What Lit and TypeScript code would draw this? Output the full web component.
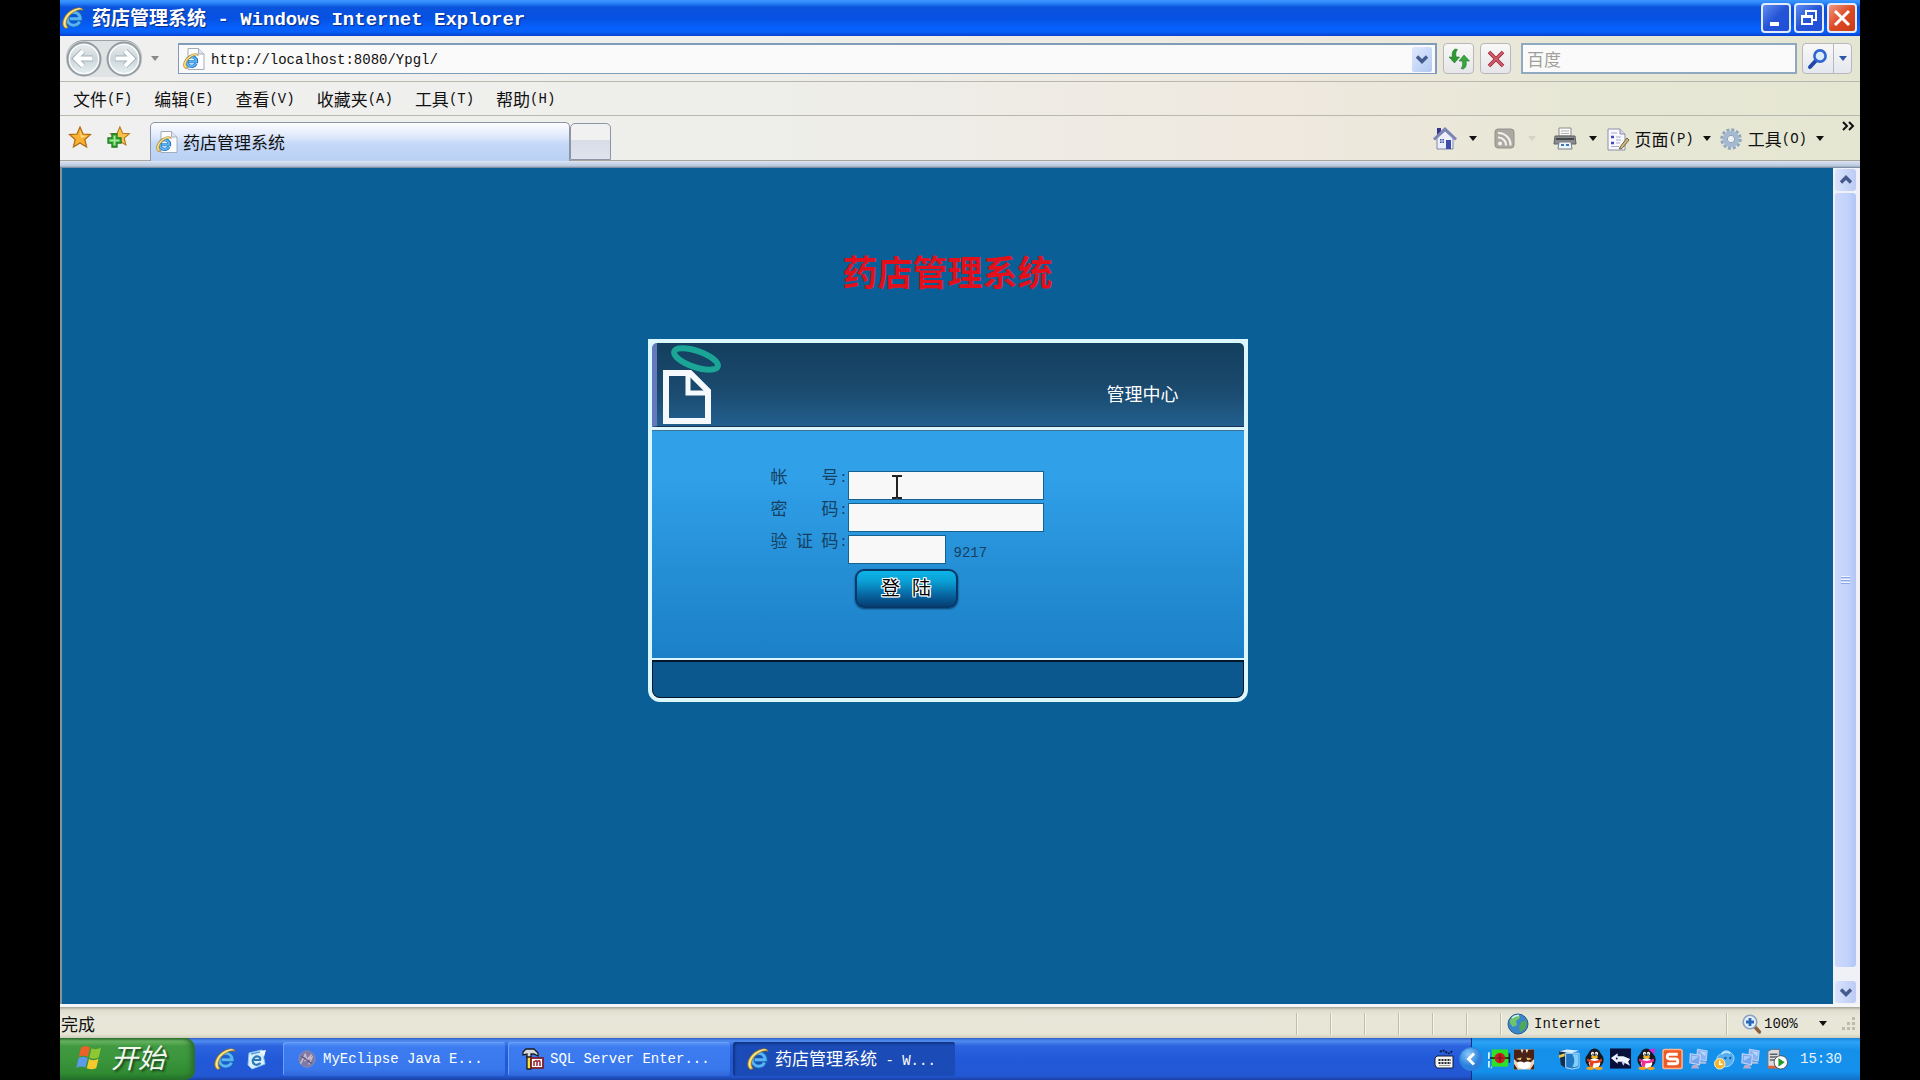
import { LitElement, html, css, svg } from "lit";
import { customElement } from "lit/decorators.js";

const icon = (cls: string, box: string, body: unknown) =>
  html`<svg class=${cls} viewBox=${box} aria-hidden="true">${body}</svg>`;

/* ---- shared glyph pieces ---- */
const ieMark = svg`
  <path d="M18.600 15.500A7 7 0 1 1 19.400 12.500H8" fill="none" stroke="#1766b8" stroke-width="4.600"/>
  <path d="M18.300 15.300A6.800 6.800 0 1 1 19 12.300H8" fill="none" stroke="#58b4f4" stroke-width="3"/>
  <path d="M3.500 22.500C-2.500 18 2.500 8 9 4C14.500 .5 21 -.5 22 3.500C18.500 1.800 14 4 10.500 6.500C5 10.500 2.500 17 6.500 21.500Z" fill="#f3cf58" stroke="#94701c" stroke-width=".8"/>
  <path d="M3.500 20C1 16.500 4 9.500 9.500 5.500C13 3 17 1.500 19.500 1.800" fill="none" stroke="#fdf0b0" stroke-width="1"/>`;

const ieLogo = (cls = "i22") => icon(cls, "0 0 23 23", ieMark);

const iePage = (cls = "i22") =>
  icon(cls, "0 0 22 22", svg`
  <path d="M5 .5H15.500L21 6V21.500H5Z" fill="#fdfdff" stroke="#a3acba"/>
  <path d="M15.500 .5V6H21" fill="#dfe6f2" stroke="#a3acba"/>
  <g transform="translate(0 5) scale(.7)">${ieMark}</g>`);

const caret = (cls = "caret") => icon(cls, "0 0 8 5", svg`<path d="M0 0H8L4 5Z" fill="currentColor"/>`);

const star = "M11 1L14 8L21.500 8.600L15.800 13.500L17.600 21L11 17L4.400 21L6.200 13.500L.5 8.600L8 8Z";

const penguin = (scarf: string, bow: unknown) => svg`
  <ellipse cx="11" cy="12" rx="9.500" ry="9" fill="#15181f"/>
  <ellipse cx="11" cy="7" rx="6.500" ry="7" fill="#15181f"/>
  <ellipse cx="11" cy="15.500" rx="6" ry="5.500" fill="#fff"/>
  <ellipse cx="9" cy="5.500" rx="1.700" ry="2.200" fill="#fff"/><ellipse cx="13" cy="5.500" rx="1.700" ry="2.200" fill="#fff"/>
  <circle cx="9.400" cy="6" r=".8" fill="#111"/><circle cx="12.600" cy="6" r=".8" fill="#111"/>
  <ellipse cx="11" cy="9" rx="3.600" ry="1.500" fill="#f7b21c"/>
  <path d="M3.500 10.500Q11 15.500 18.500 10.500L18.800 13.500Q14 15.800 10 15.500L9 19.500L5.500 18.500L6 14.500L3.200 13Z" fill="${scarf}"/>
  <ellipse cx="6.500" cy="20.800" rx="4" ry="1.600" fill="#f7a21c"/><ellipse cx="15.500" cy="20.800" rx="4" ry="1.600" fill="#f7a21c"/>
  ${bow}`;

const monitors = svg`
  <path d="M10 1L20 2.500L19 13L9 11Z" fill="#8db4f2" stroke="#b4cdf6" stroke-width="1.200"/>
  <path d="M12 3L18.500 4L18 8Z" fill="#bcd8fc"/>
  <path d="M12 13.500H18L19.500 16H11Z" fill="#b3bee0"/>
  <path d="M2.500 5.500L13 7L12 17L2 15Z" fill="#7aa6ee" stroke="#c3d7fa" stroke-width="1.200"/>
  <path d="M4 7.500L11.500 8.500L4 13Z" fill="#a9cbfb"/>
  <path d="M5 17H10L12 21H3Z" fill="#b9a9cc"/>`;

const art = {
  back: svg`<circle cx="18" cy="18" r="16.500" fill="url(#nav)" stroke="#949da3" stroke-width="2"/>
    <circle cx="18" cy="18" r="14.500" fill="none" stroke="#fbfcfc" stroke-width="1.200"/>
    <path d="M17 10L9.500 17.500L17 25M10 17.500H27" fill="none" stroke="#a3b1b9" stroke-width="6"/>
    <path d="M17 10L9.500 17.500L17 25M10 17.500H26.500" fill="none" stroke="#fff" stroke-width="4"/>`,
  refresh: svg`<path d="M7 1C3.500 3.500 4 7 4.600 9H1L6.500 15L11.500 9H8.200C7.400 6 7.500 4 9.500 1.500Z" fill="#2f9a32" stroke="#1d7623" stroke-width=".6"/>
    <path d="M15.500 21C19 18.500 18.500 15 17.900 13H21.500L16 7L11 13H14.300C15 16 15 18 13 20.500Z" fill="#3aa53c" stroke="#1d7623" stroke-width=".6"/>`,
  stop: svg`<path d="M4 4L18 18M18 4L4 18" stroke="#8e2a38" stroke-width="3.600"/><path d="M4 4L18 18M18 4L4 18" stroke="#d8576a" stroke-width="2"/>`,
  search: svg`<path d="M3 19L9 12.500" stroke="#1f48a8" stroke-width="4" stroke-linecap="round"/><circle cx="13" cy="8" r="5.600" fill="#dcecff" stroke="#2f66d0" stroke-width="2.600"/>`,
  chevron: svg`<path d="M2 2.500L7 7.500L12 2.500" fill="none" stroke="#44598c" stroke-width="3.400"/>`,
  star: svg`<path d=${star} fill="#f9b233" stroke="#b06a12" stroke-width="1.200"/><path d="M11 4L13 9.500L18 10L12 12Z" fill="#ffe08a"/>`,
  addStar: svg`<path transform="translate(3 0) scale(.9)" d=${star} fill="#f9c14a" stroke="#b0781a" stroke-width="1.200"/>
    <path d="M5 8H10V12H14V17H10V21H5V17H1V12H5Z" fill="#4fc04a" stroke="#1d7a22" stroke-width="1.300"/>
    <path d="M7.500 10V19M3 14.500H12" stroke="#a6ea9a" stroke-width="1.400"/>`,
  home: svg`<path d="M4 1H8V8H4Z" fill="#35358a"/><path d="M4 11V22H20V11L12 4Z" fill="#eceefb" stroke="#7d86ae"/>
    <path d="M1 12.500L12 2L23 12.500" fill="none" stroke="#7c84b4" stroke-width="3"/><path d="M13 13H18V22H13Z" fill="#3f4da6"/><path d="M7 12H11V16H7Z" fill="#485ba0"/><path d="M7 14H11M9 12V16" stroke="#dfe5ff" stroke-width=".8"/>`,
  rss: svg`<rect x="1" y="1" width="19" height="19" rx="3" fill="#a9a9a2" stroke="#92928a"/><circle cx="6" cy="15.500" r="2" fill="#f2f2ea"/>
    <path d="M4 9.500A7.500 7.500 0 0 1 12 17.500M4 5A12 12 0 0 1 16.500 17.500" fill="none" stroke="#f2f2ea" stroke-width="2.200"/>`,
  print: svg`<path d="M6 1H18V9H6Z" fill="#fafafa" stroke="#8c8c8c"/><path d="M8 4H16M8 6.500H16" stroke="#b5b5b5"/>
    <path d="M2 9H22L23 17H1Z" fill="#8a8d90" stroke="#5f6164"/><path d="M3 12H21" stroke="#45474a" stroke-width="2"/>
    <path d="M6 15H18L19 22H5Z" fill="#eef4fb" stroke="#7c7f84"/><path d="M8 18H11M13 18H16" stroke="#3a78bc" stroke-width="2"/>`,
  page: svg`<path d="M1 1H13L18 6V22H1Z" fill="#f8f8ff" stroke="#8b8fa8"/><path d="M13 1V6H18" fill="#d9dcf0" stroke="#8b8fa8"/>
    <path d="M4 9H7M4 15H7" stroke="#4447ae" stroke-width="2.400"/><path d="M9 9H14M9 12H14M9 15H13M4 18.500H12M4 5H10" stroke="#a9a9c8"/>
    <path d="M13 19L20 10L22 12L15 20.500L12.500 21Z" fill="#d5b878" stroke="#6e6440"/>`,
  gear: svg`<circle cx="12" cy="12" r="10" fill="none" stroke="#8ea5be" stroke-width="3.400" stroke-dasharray="3.200 2.036"/>
    <circle cx="12" cy="12" r="6.600" fill="none" stroke="#a5bad0" stroke-width="5"/><circle cx="12" cy="12" r="4" fill="#eef2f2" stroke="#8299b4"/>`,
  globe: svg`<circle cx="11" cy="11" r="10" fill="#3a86cc" stroke="#2a5d8d"/><path d="M3 7Q6 1.500 12 2L13 5L9 8L10 12L6 14Q2 11 3 7Z" fill="#6fc56a"/>
    <path d="M14 9L19 7Q21 12 18 16L13 19L12 14Z" fill="#4fa85a"/><path d="M5 5Q8 2 12 2.500" stroke="#d9f2ff" stroke-width="1.500" fill="none"/>`,
  zoom: svg`<path d="M12.500 12.500L17.500 18" stroke="#8a5f3c" stroke-width="3.400" stroke-linecap="round"/><circle cx="8" cy="8" r="6.800" fill="#e2effb" stroke="#8aa0bd" stroke-width="1.600"/><path d="M8 4V12M4 8H12" stroke="#2868b8" stroke-width="2.800"/>`,
  flag: svg`<path d="M5 3.500Q9.500 .5 14 3.500L12 13Q8 10.500 2.800 13Z" fill="#e8622a"/><path d="M15.500 4.300Q20 6.500 25 3.500L22.800 13.300Q18 16 13.300 13.500Z" fill="#8cc832"/>
    <path d="M2.500 14.200Q7.500 12 11.700 14.200L9.500 23.500Q5 21.500 .3 24Z" fill="#5b9bea"/><path d="M13 14.900Q18 17.500 22.500 14.700L20.300 24Q16 26.500 10.800 24.200Z" fill="#f6c92c"/>`,
  mail: svg`<path d="M3 4L16 1L19 15L6 20L2 16Z" fill="#d8eefc" stroke="#8fc7ee"/><path d="M14 2L20 1L18 8Z" fill="#f0f8ff"/>
    <path d="M14.500 14Q12 16.500 9 15.500Q6 14 7 10.500Q8.500 7 12 7.500Q15 8.500 14 11H8" fill="none" stroke="#2a78b8" stroke-width="2.200"/><path d="M5 5L14 3" stroke="#58a2d8" stroke-width="1.500"/>`,
  eclipse: svg`<circle cx="10" cy="11" r="9" fill="#7e7aa8" stroke="#8c88b0"/><path d="M3 16L8 6L10 12L15 6M7 13L16 9M12 17L16 8" stroke="#c9bcc8" stroke-width="1.700" fill="none"/><path d="M4 8L15 16" stroke="#55507e" stroke-width="1.300"/>`,
  sql: svg`<path d="M1 4L4 1H12L16 5V8L12 6H9V10H5V6L1 7Z" fill="#d7dbe0" stroke="#1c1c1c" stroke-width="1.300"/><path d="M5 9H9V21H5Z" fill="#f2e23a" stroke="#1c1c1c" stroke-width="1.300"/>
    <rect x="9" y="10" width="12" height="10" fill="#fff" stroke="#7b1f2c" stroke-width="1.800"/><path d="M12 18V13M12 14Q15 11.500 15 14V18M15 14Q18 11.500 18 14V18" stroke="#9a1f30" stroke-width="1.500" fill="none"/>`,
  keyboard: svg`<path d="M6 3Q9 0 12 3T18 2" stroke="#0c1a40" stroke-width="1.800" fill="none" stroke-dasharray="2 1"/><path d="M3 7H19V19H3L1 16V9Z" fill="#f4f4f0" stroke="#121a38"/>
    <path d="M4.500 11H17M4.500 14H17" stroke="#20242c" stroke-width="1.800" stroke-dasharray="2 1"/><path d="M5 16.500H16" stroke="#9a9a94"/>`,
  hide: svg`<circle cx="12" cy="12" r="11.500" fill="url(#hideFill)" stroke="#2d7fd8"/><path d="M15 6.500L9.500 12L15 17.500" fill="none" stroke="#fff" stroke-width="3"/>`,
  card: svg`<rect x="5" y="1" width="17" height="18" fill="#2fe02a"/><path d="M2 4V20H5" stroke="#fff" stroke-width="1.600" fill="none" stroke-dasharray="7 2"/><path d="M3 10H24M23.500 5V15" stroke="#0d2410" stroke-width="1.600"/><circle cx="13.500" cy="10" r="5.500" fill="#c81e22"/><path d="M10 10H17M13.500 6V14" stroke="#6a1210" stroke-width="1.200"/>`,
  owl: svg`<rect x="1" y="1" width="21" height="21" fill="#e8d5b8"/><path d="M1 1H22V11L18 15H5L1 11Z" fill="#4a2115"/><path d="M8 1L9.500 5L11 1ZM13 1L14.500 5L16 1Z" fill="#f1e6da"/>
    <path d="M3 11L9 9.500L8 12Z" fill="#f6ead0"/><path d="M20 11L14 9.500L15 12Z" fill="#f6ead0"/><circle cx="7" cy="11" r="1.200" fill="#e5b93c"/><circle cx="16" cy="11" r="1.200" fill="#e5b93c"/>
    <path d="M4 15Q8 12 11.500 15Q15 12 19 15L17 20Q11 23 6 20Z" fill="#fff"/><path d="M1 16L5 22H1ZM22 16L18 22H22Z" fill="#4a2115"/>`,
  box: svg`<path d="M1 3L8 1V21L3 17Z" fill="#12304e"/><path d="M1 3L9 1L22 2L14 5Z" fill="#d9edfb"/><path d="M8 5H22V20Q15 23 8 20Z" fill="#2079c4" stroke="#bfe2fa"/><path d="M15 6H21V18Q18 20 15 19Q19 13 15 6Z" fill="#7ed0fa"/><path d="M1 7L7 5V8L1 10Z" fill="#f2c94a"/>`,
  fish: svg`<rect width="22" height="21" fill="#08103c"/><path d="M1 10L8 5V8H14L21 11L19 14L21 18L13 14H8V16Z" fill="#eef4ff"/><path d="M12 14L14 18L16 14" fill="#c9d8f2"/><circle cx="7" cy="10.500" r="1" fill="#08103c"/>`,
  sogou: svg`<rect x="1" y="1" width="20" height="20" rx="2" fill="#ee5a24" stroke="#ffb38c" stroke-width="1.600"/><path d="M16.500 6H8Q5.500 6 5.500 8.500T8 11H14Q16.500 11 16.500 13.500T14 16H5.500" fill="none" stroke="#fff" stroke-width="3"/>`,
  cloud: svg`<path d="M4 15Q1 8 7 6Q11 0 17 4Q23 8 20 14Q17 20 10 19Z" fill="#54aef0" stroke="#a7dafc"/><path d="M8 6Q12 2 17 5" stroke="#c5e8ff" stroke-width="1.500" fill="none"/><circle cx="12" cy="10" r="1.300" fill="#1f62ac"/><circle cx="17" cy="10" r="1.300" fill="#1f62ac"/>
    <circle cx="6" cy="16" r="5.500" fill="#f3b52c" stroke="#fff1c4"/><path d="M6 12.500V16.500H9" stroke="#fff" stroke-width="1.600" fill="none"/>`,
  server: svg`<path d="M2 3L6 1H14V20H2Z" fill="#d9dde2" stroke="#6a6f78"/><path d="M4 6H12M4 9H12M4 12H12" stroke="#5c6068" stroke-width="1.500"/><path d="M2 18H12V21H2Z" fill="#d8663c"/><circle cx="15.500" cy="14.500" r="7" fill="#fff" stroke="#4a5058"/><path d="M13 10L19.500 14.500L13 19Z" fill="#1f9a2c"/>`,
};

@customElement("app-root")
export class AppRoot extends LitElement {
  static styles = css`
    :host {
      display: block;
      --hair: #b9b8ae;
      --mono: "Liberation Mono", "Noto Sans CJK SC", monospace;
      --han: "Noto Sans CJK SC", sans-serif;
      font: 14px/20px var(--mono);
      color: #111;
      background: #000;
    }
    * { box-sizing: border-box; }
    svg { display: block; flex: none; overflow: visible; }
    button {
      display: flex; align-items: center; justify-content: center;
      margin: 0; padding: 0; border: 0; background: none;
      font: inherit; color: inherit; flex: none; white-space: nowrap;
    }
    input { font: inherit; color: inherit; border: 0; margin: 0; outline: none; min-width: 0; }
    .han { font-family: var(--han); font-size: 17px; line-height: 20px; }
    .i20 { width: 20px; height: 20px; }
    .i22 { width: 22px; height: 22px; }
    .i24 { width: 24px; height: 24px; }
    .i27 { width: 27px; height: 27px; }
    .i36 { width: 36px; height: 36px; }
    .chev { width: 14px; height: 10px; }
    .chev.up { transform: rotate(180deg); }
    .caret { width: 8px; height: 5px; }
    .flip { transform: scaleX(-1); }

    .screen { display: flex; flex-direction: column; min-height: 100vh; margin: 0 60px; background: #0a6096; }

    .title {
      display: flex; align-items: center; gap: 8px; height: 36px; padding: 0 3px 0 2px;
      color: #fff; font-weight: bold;
      background: linear-gradient(#3c97ff 0, #2b86f8 3px, #0a53dd 7px, #0651e2 18px, #0661fc 28px, #0660f8 32px, #0a3fce 36px);
      text-shadow: 1px 1px 1px #0b2c86;
    }
    .title h1 { flex: 1; margin: 0; font-size: 19px; line-height: 24px; white-space: pre; }
    .title .han { font-size: 19px; line-height: 24px; }
    .winbtns { display: flex; gap: 3px; }
    .winbtn {
      width: 30px; height: 30px; border: 2px solid #e4ecfb; border-radius: 4px;
      background: linear-gradient(135deg, #5f8df0, #2554d6 50%, #1d4fd8);
    }
    .winbtn.close { background: linear-gradient(135deg, #f09a80, #dd4a25 50%, #c93c14); }

    .chrome { background: linear-gradient(90deg, #f0f0f0, #eeeeea 40%, #efe9df 68%, #e7e7d6 84%, #e5e6d2); }
    .address { display: flex; align-items: center; height: 46px; padding: 0 8px 0 6px; border-bottom: 1px solid var(--hair); }
    .nav { display: flex; gap: 4px; margin-right: 9px; }
    .navpair { display: flex; gap: 4px; border-radius: 18px; background: #dfe3e4; box-shadow: 0 -1px #9da3a6; }
    .nav-caret { color: #8a8a8a; margin-right: 19px; }
    .url {
      display: flex; align-items: center; flex: 1; height: 31px; gap: 6px; padding: 0 3px 0 4px;
      background: #fafafa; border: 1px solid #7f9db9; border-width: 2px 2px 1px 1px;
    }
    .url input { flex: 1; height: 24px; padding: 2px 0 0; background: transparent; }
    .drop { width: 20px; height: 25px; border-radius: 2px; background: linear-gradient(135deg, #dfe9fd, #b2c8f2); }
    .toolbtn {
      width: 31px; height: 31px; border: 1px solid #b7b7bd; border-radius: 4px; margin-left: 6px;
      background: linear-gradient(#f8f8f6, #e6e6ea);
    }
    .find {
      width: 276px; height: 31px; margin-left: 10px; padding: 0 4px; background: #fafafa;
      border: 2px solid #8fa9c0; font-family: var(--han); font-size: 17px;
    }
    .find::placeholder { color: #a09f98; opacity: 1; }
    .findbtns { display: flex; margin-left: 5px; height: 31px; border: 1px solid #b7b7bd; border-radius: 4px; background: linear-gradient(#f8f8f6, #e4e7ee); }
    .findbtns button { width: 30px; color: #2d58a8; }
    .findbtns button + button { width: 18px; border-left: 1px solid #b7b7bd; }

    .menu { display: flex; align-items: center; gap: 22px; height: 34px; padding: 0 13px; border-bottom: 1px solid var(--hair); }
    .menu button, .tools button { height: 24px; }

    .tabs { display: flex; align-items: flex-end; height: 45px; padding-left: 9px; border-bottom: 1px solid #a5a5a0; }
    .favs { display: flex; gap: 16px; padding-bottom: 12px; margin-right: 21px; }
    .tab {
      display: flex; align-items: center; justify-content: flex-start; gap: 5px; width: 420px; height: 39px; padding: 0 5px;
      border: 1px solid #8d94a6; border-bottom: 0; border-radius: 5px 5px 0 0; margin-bottom: -1px;
      background: linear-gradient(#fdfdff, #dfe9fb 35%, #c4d8f8 55%, #bad0f4);
    }
    .newtab { width: 41px; height: 37px; border: 1px solid #8d94a6; border-radius: 5px 5px 0 0; background: linear-gradient(#f1f1f1 45%, #d9dde8 46%, #dfe3ee); }
    .tools { display: flex; align-items: center; margin-left: auto; height: 43px; padding-right: 5px; }
    .tools .caret { margin: 0 10px 0 12px; }
    .tools .label { margin-left: 6px; }
    .tools .near { margin: 0 9px; }
    .tools .faint { color: #d3d3c6; }
    .tools .wide { margin-right: 17px; }
    .tools .more { align-self: flex-start; height: 18px; }
    .strip { height: 7px; background: linear-gradient(#dbe4f1, #b9c9e0 70%, #6d7f92); }

    .view { display: flex; flex: 1; border-left: 2px solid #84949c; }
    .page { flex: 1; display: flex; flex-direction: column; align-items: center; padding-top: 77px; }
    .heading { margin: 0; font: bold 35px/52px var(--han); color: #e3101c; }
    .scroll { display: flex; flex-direction: column; width: 27px; padding: 1px 4px 1px 2px; gap: 2px; background: #f0f1f6; }
    .scroll button { height: 22px; border-radius: 3px; background: linear-gradient(90deg, #d9e3fd, #bccbf5); }
    .thumb { display: flex; align-items: center; justify-content: center; flex: 1; margin-bottom: 12px; border-radius: 3px; background: linear-gradient(90deg, #cbd8fc, #c2d2fb 60%, #b2c5f6); }
    .gripper { width: 9px; height: 9px; background: repeating-linear-gradient(#eef4fe 0 1px, #8ca8e4 1px 2px, transparent 2px 3px); }

    .card {
      display: flex; flex-direction: column; width: 600px; margin-top: 42px;
      border: 4px solid #dcf6fe; border-radius: 0 0 12px 12px; background: #dcf6fe;
    }
    .cardhead {
      position: relative; display: flex; align-items: center; justify-content: flex-end; height: 84px; padding: 16px 65px 0 0;
      border-left: 5px solid #6478bc; border-bottom: 1px solid #1b3350; border-radius: 5px 5px 0 0;
      background: linear-gradient(#143f5e, #1b4b70 60%, #22608f); color: #fff;
    }
    .cardhead h3 { margin: 0; font: 18px/24px var(--han); }
    .emblem { position: absolute; left: 5px; top: 0; width: 62px; height: 84px; }
    .cardbody {
      margin-top: 3px; height: 228px; padding: 38px 0 0 119px; border-top: 1px solid #3c7294;
      background: linear-gradient(#30a0e9 20%, #258fd6 60%, #1b80c8);
      color: #173f5f;
    }
    .row { display: flex; align-items: center; height: 32px; }
    .row label { display: flex; align-items: flex-start; height: 32px; width: 77px; font-family: var(--han); }
    .row .name { width: 68px; font-size: 17px; line-height: 14px; text-align: justify; text-align-last: justify; }
    .row .colon { font-size: 14px; line-height: 14px; margin-left: 3px; }
    .row input { width: 196px; height: 29px; padding: 0 6px; background: #f8f8f8; border: 1px solid #17618f; color: #111; }
    .row .short { width: 98px; }
    .code { margin-left: 8px; padding-top: 8px; }
    .login {
      width: 103px; height: 39px; margin: 4px 0 0 84px; padding-bottom: 3px; border: 2px solid #06396a; border-radius: 9px;
      background: linear-gradient(#0cb4e8, #0a9fd4 30%, #08639f 70%, #053f74);
      box-shadow: 0 1px 2px #0b3c66; gap: 12px; font: 19px/24px var(--han); color: #000;
      text-shadow: 1px 0 #fff, -1px 0 #fff, 0 1px #fff, 0 -1px #fff, 1px 1px #fff, -1px -1px #fff, 1px -1px #fff, -1px 1px #fff;
    }
    .cardfoot { height: 38px; margin-top: 2px; border: 1px solid #06162c; border-top-width: 2px; border-radius: 0 0 8px 8px; background: #0b588f; }
    .field { position: relative; display: flex; }
    .ibeam { position: absolute; left: 43px; top: 4px; width: 12px; height: 24px; }

    .status {
      display: flex; align-items: center; height: 34px; padding-top: 5px;
      background: linear-gradient(#f4f6f8 0 3px, #a4a397 3px, #dddccd 6px, #e7e6d8 12px, #e7e6d6 30px, #cfcdb9);
    }
    .status > .han { flex: 1; padding-left: 1px; }
    .cell { display: flex; align-items: center; height: 22px; width: 34px; border-left: 1px solid #bfbdac; box-shadow: inset 1px 0 #f6f5ea; }
    .cell.zone { width: 226px; padding-left: 6px; gap: 5px; }
    .cell.zoomer { width: 134px; padding-left: 15px; }
    .cell.zoomer button { gap: 2px; }
    .cell.zoomer .caret { margin-left: 19px; }
    .grip { width: 14px; height: 14px; margin-left: 15px; }

    .taskbar { display: flex; align-items: stretch; height: 42px; color: #fff; background: linear-gradient(#2e62c8, #4f8cf0 3px, #2c63de 8px, #2259d8 50%, #2358d4 90%, #1a42a4); }
    .start {
      width: 135px; gap: 9px; justify-content: flex-start; padding: 0 0 4px 15px; border-radius: 0 10px 10px 0; color: #f4f8ee;
      background: linear-gradient(#2c6f30, #6bb865 3px, #419940 8px, #3b963c 50%, #2f8a31 85%, #22702a);
      box-shadow: inset -4px 0 5px #2a6e2c; font: italic 27px/36px var(--han); text-shadow: 2px 2px 2px #1c4a20;
    }
    .quick { display: flex; align-items: center; gap: 10px; padding: 0 17px 0 19px; }
    .tasks { display: flex; flex: 1; gap: 3px; padding: 4px 0; }
    .task {
      flex: 0 1 222px; min-width: 0; justify-content: flex-start; gap: 6px; padding: 0 14px; border-radius: 3px;
      background: linear-gradient(#5c97f8, #3c7cf0 5px, #3878ec 80%, #2f66d8); box-shadow: inset 1px 1px #6ba0f8;
    }
    .task.on { background: #1b4bb6; box-shadow: inset 2px 2px 2px #123684; }
    .lang { display: flex; align-items: center; padding-right: 17px; }
    .tray { display: flex; align-items: center; gap: 4px; padding-right: 18px; border-left: 1px solid #12307e; background: linear-gradient(#1c84d8, #2ba4f6 4px, #1590ea 12px, #1490ec 80%, #1270c8); }
    .hide { margin-left: -13px; }
    .gap { width: 15px; }
    .clock { margin-left: 8px; color: #e6f4ff; }
  `;

  private menus = [["文件", "F"], ["编辑", "E"], ["查看", "V"], ["收藏夹", "A"], ["工具", "T"], ["帮助", "H"]];

  private tray = [
    art.card, art.owl, null, art.box,
    penguin("#e2451f", null), art.fish,
    penguin("#ef2f9a", svg`<path d="M13 1L20 0L19 6Z" fill="#d62ad0"/>`),
    art.sogou, monitors, art.cloud, monitors, art.server,
  ];

  private fields = [
    { id: "account", name: "帐号", type: "text", cls: "" },
    { id: "password", name: "密码", type: "password", cls: "" },
    { id: "captcha", name: "验证码", type: "text", cls: "short" },
  ];

  private navDefs = svg`<defs><linearGradient id="nav" x2="0" y2="1"><stop offset="0" stop-color="#eceff0"/><stop offset=".5" stop-color="#ccd6da"/><stop offset="1" stop-color="#e9f1f3"/></linearGradient></defs>`;
  private hideDefs = svg`<defs><radialGradient id="hideFill" cx=".4" cy=".3"><stop offset="0" stop-color="#8ccbfa"/><stop offset="1" stop-color="#2a80dc"/></radialGradient></defs>`;

  private renderTitle() {
    return html`<header class="title">
      ${ieLogo()}
      <h1><span class="han">药店管理系统</span> - Windows Internet Explorer</h1>
      <div class="winbtns">
        <button class="winbtn" aria-label="最小化">${icon("i20", "0 0 20 20", svg`<path d="M4 14H13V18H4Z" fill="#fff"/>`)}</button>
        <button class="winbtn" aria-label="还原">${icon("i20", "0 0 20 20", svg`<path d="M7 7V3H17V12H13" fill="none" stroke="#fff" stroke-width="2"/><path d="M3 8H13V16H3ZM3 9H13" fill="none" stroke="#fff" stroke-width="2"/>`)}</button>
        <button class="winbtn close" aria-label="关闭">${icon("i20", "0 0 20 20", svg`<path d="M3 3L17 17M17 3L3 17" stroke="#fff" stroke-width="3"/>`)}</button>
      </div>
    </header>`;
  }

  private renderAddress() {
    return html`<div class="address">
      <div class="nav">
        <div class="navpair">
          <button aria-label="后退">${icon("i36", "0 0 36 36", svg`${this.navDefs}${art.back}`)}</button>
          <button aria-label="前进">${icon("i36 flip", "0 0 36 36", svg`${this.navDefs}${art.back}`)}</button>
        </div>
      </div>
      <button class="nav-caret" aria-label="最近的页面">${caret()}</button>
      <div class="url">
        ${iePage()}
        <input type="text" aria-label="地址" value="http://localhost:8080/Ypgl/" />
        <button class="drop" aria-label="展开地址">${icon("chev", "0 0 14 10", art.chevron)}</button>
      </div>
      <button class="toolbtn" aria-label="刷新">${icon("i22", "0 0 22 22", art.refresh)}</button>
      <button class="toolbtn" aria-label="停止">${icon("i22", "0 0 22 22", art.stop)}</button>
      <input class="find" type="text" aria-label="搜索" placeholder="百度" />
      <div class="findbtns">
        <button aria-label="开始搜索">${icon("i22", "0 0 22 22", art.search)}</button>
        <button aria-label="搜索选项">${caret()}</button>
      </div>
    </div>`;
  }

  private renderTabs() {
    return html`<div class="tabs">
      <div class="favs">
        <button aria-label="收藏中心">${icon("i22", "0 0 22 22", art.star)}</button>
        <button aria-label="添加到收藏夹">${icon("i22", "0 0 22 22", art.addStar)}</button>
      </div>
      <button class="tab">${iePage()}<span class="han">药店管理系统</span></button>
      <button class="newtab" aria-label="新选项卡"></button>
      <div class="tools">
        <button aria-label="主页">${icon("i24", "0 0 24 24", art.home)}${caret("caret wide")}</button>
        <button aria-label="源">${icon("i22", "0 0 22 22", art.rss)}${caret("caret faint wide")}</button>
        <button aria-label="打印">${icon("i24", "0 0 24 24", art.print)}${caret()}</button>
        <button>${icon("i22", "0 0 22 22", art.page)}<span class="label han">页面</span>(P)${caret("caret near")}</button>
        <button>${icon("i22", "0 0 24 24", art.gear)}<span class="label han">工具</span>(O)${caret("caret near wide")}</button>
        <button class="more" aria-label="更多">${icon("chev", "0 0 14 10", svg`<path d="M2 1L6 5L2 9M8 1L12 5L8 9" fill="none" stroke="#111" stroke-width="2"/>`)}</button>
      </div>
    </div>`;
  }

  private renderLogin() {
    return html`<main class="page">
      <h2 class="heading">药店管理系统</h2>
      <form class="card" @submit=${(e: Event) => e.preventDefault()}>
        <div class="cardhead">
          ${icon("emblem", "0 0 62 84", svg`
            <ellipse cx="34" cy="16" rx="23" ry="8" transform="rotate(19 34 16)" fill="none" stroke="#1ba596" stroke-width="6"/>
            <path d="M4 30H28L46 48V78H4Z" fill="none" stroke="#f6f9fc" stroke-width="6"/>
            <path d="M26 30V50H46" fill="none" stroke="#f6f9fc" stroke-width="5"/>`)}
          <h3>管理中心</h3>
        </div>
        <div class="cardbody">
          ${this.fields.map((f, i) => html`<div class="row">
            <label for=${f.id}><span class="name">${f.name}</span><span class="colon">:</span></label>
            <div class="field">
              <input id=${f.id} type=${f.type} class=${f.cls} autocomplete="off" />
              ${i === 0 ? icon("ibeam", "0 0 12 24", svg`<path d="M1 1H5L6 2L7 1H11M6 2V22M1 23H5L6 22L7 23H11" fill="none" stroke="#222" stroke-width="2"/>`) : null}
            </div>
            ${f.cls ? html`<span class="code">9217</span>` : null}
          </div>`)}
          <button class="login" type="submit"><span>登</span><span>陆</span></button>
        </div>
        <div class="cardfoot"></div>
      </form>
    </main>`;
  }

  private renderStatus() {
    return html`<div class="status">
      <span class="han">完成</span>
      ${[0, 1, 2, 3, 4, 5].map(() => html`<div class="cell"></div>`)}
      <div class="cell zone">${icon("i22", "0 0 22 22", art.globe)}<span>Internet</span></div>
      <div class="cell zoomer">
        <button>${icon("i20", "0 0 20 20", art.zoom)}<span>100%</span>${caret()}</button>
        ${icon("grip", "0 0 14 14", svg`<path d="M10 0H13V3H10ZM10 5H13V8H10ZM5 5H8V8H5ZM10 10H13V13H10ZM5 10H8V13H5ZM0 10H3V13H0Z" fill="#bdbba9"/>`)}
      </div>
    </div>`;
  }

  private renderTaskbar() {
    return html`<footer class="taskbar">
      <button class="start">${icon("i27", "0 0 25 27", art.flag)}<span>开始</span></button>
      <div class="quick">
        <button aria-label="Internet Explorer">${ieLogo()}</button>
        <button aria-label="Outlook Express">${icon("i20", "0 0 20 20", art.mail)}</button>
      </div>
      <div class="tasks">
        <button class="task">${icon("i20", "0 0 20 22", art.eclipse)}<span>MyEclipse Java E...</span></button>
        <button class="task">${icon("i22", "0 0 22 22", art.sql)}<span>SQL Server Enter...</span></button>
        <button class="task on">${ieLogo()}<span><span class="han">药店管理系统</span> - W...</span></button>
      </div>
      <div class="lang">${icon("i20", "0 0 20 20", art.keyboard)}</div>
      <div class="tray">
        <button class="hide" aria-label="隐藏图标">${icon("i24", "0 0 24 24", svg`${this.hideDefs}${art.hide}`)}</button>
        ${this.tray.map((t) => (t ? icon("i22", "0 0 23 22", t) : html`<span class="gap"></span>`))}
        <span class="clock">15:30</span>
      </div>
    </footer>`;
  }

  render() {
    return html`<div class="screen">
      ${this.renderTitle()}
      <div class="chrome">
        ${this.renderAddress()}
        <nav class="menu">${this.menus.map(([n, k]) => html`<button><span class="han">${n}</span>(${k})</button>`)}</nav>
        ${this.renderTabs()}
      </div>
      <div class="strip"></div>
      <div class="view">
        ${this.renderLogin()}
        <div class="scroll">
          <button aria-label="向上滚动">${icon("chev up", "0 0 14 10", art.chevron)}</button>
          <div class="thumb"><div class="gripper"></div></div>
          <button aria-label="向下滚动">${icon("chev", "0 0 14 10", art.chevron)}</button>
        </div>
      </div>
      ${this.renderStatus()}
      ${this.renderTaskbar()}
    </div>`;
  }
}
